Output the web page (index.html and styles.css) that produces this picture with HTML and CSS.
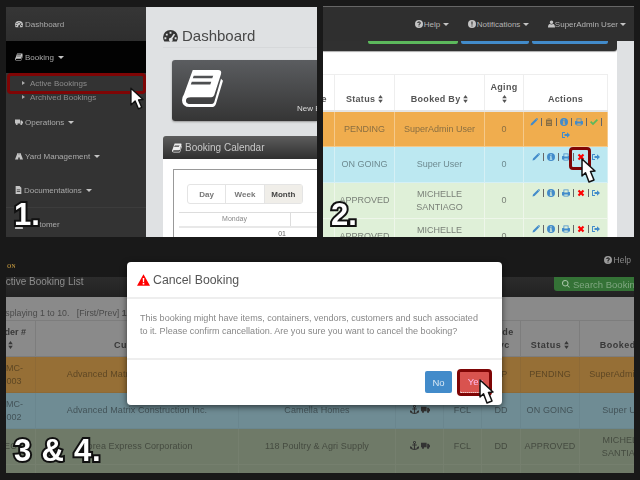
FILE: index.html
```html
<!DOCTYPE html>
<html lang="en">
<head>
<meta charset="utf-8">
<title>Cancel Booking Steps</title>
<link rel="stylesheet" href="styles.css">
</head>
<body>
<svg class="defs" width="0" height="0">
  <symbol id="i-gauge" viewBox="0 0 16 14"><path fill-rule="evenodd" d="M8 1a8 8 0 0 0-8 8c0 1.700.5 3.200 1.300 4.500h13.400C15.500 12.200 16 10.700 16 9a8 8 0 0 0-8-8zM7 3h2v2H7zM3 5h2v2H3zM11.500 5l1.500 1-3 4.500a2 2 0 1 1-1.500-1zM1.500 9h2v2h-2zM12.500 9h2v2h-2z"/></symbol>
  <symbol id="i-book" viewBox="0 0 42 40"><path fill-rule="evenodd" d="M11 1h26q4 0 3 4l-7 22q-1 2-3 2H9q-5 0-5 3.500T9 36h21q2 0 3-2l7-24 2 2-7 23q-1 4-5 4H8q-8 0-8-7 0-3 2-6zM12 7l-1 2.500h20l1-2.500zM10 13l-1 3h20l1-3z"/></symbol>
  <symbol id="i-truck" viewBox="0 0 16 14"><path d="M0 2h10v8H0zM11 4h2.500L16 7v3h-5z"/><circle cx="3.500" cy="11" r="2"/><circle cx="12.500" cy="11" r="2"/></symbol>
  <symbol id="i-road" viewBox="0 0 16 14"><path d="M5 1h2.300v3h1.400V1H11l5 13H9.500v-4h-3v4H0z"/></symbol>
  <symbol id="i-file" viewBox="0 0 12 14"><path fill-rule="evenodd" d="M1 0h7l3 3v11H1zM3 6v1.500h6V6zM3 9v1.500h6V9z"/></symbol>
  <symbol id="i-user" viewBox="0 0 14 14"><path d="M7 0a3.500 3.500 0 1 1 0 7 3.500 3.500 0 0 1 0-7zM0 14c0-4 1.500-6.500 3.500-6.800 2 1.300 5 1.300 7 0C12.500 7.500 14 10 14 14z"/></symbol>
  <symbol id="i-help" viewBox="0 0 16 16"><path fill-rule="evenodd" d="M8 0a8 8 0 1 0 0 16A8 8 0 0 0 8 0zM7 11h2v2H7zM4.500 6c0-2 1.500-3 3.500-3s3.500 1 3.500 3c0 2.500-2.500 2.500-2.500 4H7c0-2.500 2.300-2.500 2.300-4 0-.7-.5-1-1.300-1s-1.300.4-1.300 1z"/></symbol>
  <symbol id="i-alert" viewBox="0 0 16 16"><path fill-rule="evenodd" d="M8 0a8 8 0 1 0 0 16A8 8 0 0 0 8 0zM6.800 3h2.400l-.3 6.500H7.100zM7 11h2v2H7z"/></symbol>
  <symbol id="i-info" viewBox="0 0 16 16"><path fill-rule="evenodd" d="M8 0a8 8 0 1 0 0 16A8 8 0 0 0 8 0zM6.800 2.500h2.400v2.300H6.800zM5.800 6.300h3.400v5h1.300v2h-5v-2h1.200V8.300H5.800z"/></symbol>
  <symbol id="i-pencil" viewBox="0 0 16 16"><path d="M11.500 1.500l3 3-9.500 9.500-4 1 1-4zM12.500.5q1-.8 2 0l1 1q.8 1 0 2l-.5.500-3-3z"/></symbol>
  <symbol id="i-trash" viewBox="0 0 16 16"><path fill-rule="evenodd" d="M2 3h12v13H2zM5 1h6v1H5zM4 6v1h8V6zM4 9v1h8V9zM4 12v1h8v-1z"/></symbol>
  <symbol id="i-print" viewBox="0 0 16 16"><path fill-rule="evenodd" d="M3 1h10v5h2q1 0 1 1v6h-3v2H3v-2H0V7q0-1 1-1h2zM4.500 2.500V7h7V2.500zM4.500 11v2.500h7V11z"/></symbol>
  <symbol id="i-check" viewBox="0 0 16 16"><path d="M0 8.500l2.500-2.500 3.500 3.500 7.500-7.500L16 4.500 6 14.500z"/></symbol>
  <symbol id="i-x" viewBox="0 0 16 16"><path d="M1.500 4.500l3-3L8 5l3.500-3.500 3 3L11 8l3.500 3.500-3 3L8 11l-3.500 3.500-3-3L5 8z"/></symbol>
  <symbol id="i-out" viewBox="0 0 16 16"><path d="M0 3q0-1 1-1h5v2H2v8h4v2H1q-1 0-1-1zM5 6h5V2.500L16 8l-6 5.500V10H5z"/></symbol>
  <symbol id="i-sort" viewBox="0 0 8 14"><path d="M4 0l4 5.500H0zM4 14l4-5.500H0z"/></symbol>
  <symbol id="i-anchor" viewBox="0 0 16 16"><path fill-rule="evenodd" d="M8 0a2.500 2.500 0 0 1 1 4.800V6h3v1.800H9v6c2 0 3.200-1 3.800-2.300L11.500 11 16 9.500V14l-1.300-1C13.800 14.800 11.500 16 8 16s-5.800-1.200-6.700-3L0 14V9.500L4.500 11l-1.300.5C3.800 12.800 5 13.800 7 13.800v-6H4V6h3V4.800A2.500 2.500 0 0 1 8 0zM8 1.500a1 1 0 1 0 0 2 1 1 0 0 0 0-2z"/></symbol>
  <symbol id="i-search" viewBox="0 0 16 16"><path fill-rule="evenodd" d="M6.500 0a6.500 6.500 0 0 1 5.200 10.400l4 4-1.300 1.300-4-4A6.500 6.500 0 1 1 6.500 0zM6.500 2a4.500 4.500 0 1 0 0 9 4.500 4.500 0 0 0 0-9z"/></symbol>
  <symbol id="i-warn" viewBox="0 0 16 14"><path fill-rule="evenodd" d="M8 0l8 14H0zM7 4.500l.3 5h1.400l.3-5zM7 10.500v2h2v-2z"/></symbol>
  <symbol id="i-cursor" viewBox="0 0 15 24"><path d="M1 1v18l4.500-4.300L9 23l3.500-1.600-3.300-7.900L14 13z" fill="#fff" stroke="#111" stroke-width="1.500" stroke-linejoin="round"/></symbol>
  <symbol id="i-hand" viewBox="0 0 15 25"><path d="M1 1v17l3.500-3.300L8 24l5-2-3.500-8.500 4.500-.5z" fill="#fff" stroke="#111" stroke-width="1.500" stroke-linejoin="round"/></symbol>
</svg>

<!-- Step 1 -->
<section class="win win-a">
  <nav class="side">
    <a class="side-item side-first"><svg class="ico"><use href="#i-gauge"/></svg>Dashboard</a>
    <a class="side-item side-open"><svg class="ico"><use href="#i-book"/></svg>Booking<i class="caret"></i></a>
    <ul class="side-sub">
      <li><i class="tri"></i>Active Bookings</li>
      <li><i class="tri"></i>Archived Bookings</li>
    </ul>
    <a class="side-item"><svg class="ico"><use href="#i-truck"/></svg>Operations<i class="caret"></i></a>
    <a class="side-item"><svg class="ico"><use href="#i-road"/></svg>Yard Management<i class="caret"></i></a>
    <a class="side-item"><svg class="ico ico-file"><use href="#i-file"/></svg>Documentations<i class="caret"></i></a>
    <a class="side-item side-line"><svg class="ico"><use href="#i-user"/></svg>Customer</a>
  </nav>
  <main class="dash">
    <h1 class="dash-title"><svg class="dash-gauge"><use href="#i-gauge"/></svg>Dashboard</h1>
    <div class="tile">
      <svg class="tile-book"><use href="#i-book"/></svg>
      <span class="tile-label">New Booking</span>
    </div>
    <div class="cal-head"><svg class="cal-ico"><use href="#i-book"/></svg>Booking Calendar</div>
    <div class="cal-body">
      <div class="cal-box">
        <div class="seg"><span>Day</span><span>Week</span><span class="seg-on">Month</span></div>
        <div class="cal-row cal-row-head"><span class="cal-cell">Monday</span></div>
        <div class="cal-row"><span class="cal-cell cal-date">01</span></div>
      </div>
    </div>
  </main>
  <span class="hl hl-a"></span>
  <svg class="ptr ptr-a"><use href="#i-cursor"/></svg>
  <span class="step step-a">1.</span>
</section>

<!-- Step 2 -->
<section class="win win-b">
  <header class="topnav">
    <span class="topnav-item"><svg class="ico"><use href="#i-help"/></svg>Help<i class="caret"></i></span>
    <span class="topnav-item"><svg class="ico"><use href="#i-alert"/></svg>Notifications<i class="caret"></i></span>
    <span class="topnav-item topnav-user"><svg class="ico"><use href="#i-user"/></svg>SuperAdmin User<i class="caret"></i></span>
  </header>
  <div class="page">
    <div class="sheet">
      <div class="strip"><span class="strip-green"></span><span class="strip-blue strip-b1"></span><span class="strip-blue strip-b2"></span></div>
      <table class="list">
        <colgroup><col class="c0"><col class="c1"><col class="c2"><col class="c3"><col class="c4"></colgroup>
        <thead>
          <tr><th>Mode</th><th>Status <svg class="srt"><use href="#i-sort"/></svg></th><th>Booked By <svg class="srt"><use href="#i-sort"/></svg></th><th>Aging <svg class="srt"><use href="#i-sort"/></svg></th><th>Actions</th></tr>
        </thead>
        <tbody>
          <tr class="r-o"><td>DP</td><td>PENDING</td><td>SuperAdmin User</td><td>0</td><td class="acts"><div class="acts-in">
            <svg class="a blue"><use href="#i-pencil"/></svg><i class="sep"></i><svg class="a brown"><use href="#i-trash"/></svg><i class="sep"></i><svg class="a blue"><use href="#i-info"/></svg><i class="sep"></i><svg class="a blue"><use href="#i-print"/></svg><i class="sep"></i><svg class="a green"><use href="#i-check"/></svg><i class="sep"></i><svg class="a blue"><use href="#i-out"/></svg></div></td></tr>
          <tr class="r-b"><td>DD</td><td>ON GOING</td><td>Super User</td><td>0</td><td class="acts"><div class="acts-in">
            <svg class="a blue"><use href="#i-pencil"/></svg><i class="sep"></i><svg class="a blue"><use href="#i-info"/></svg><i class="sep"></i><svg class="a blue"><use href="#i-print"/></svg><i class="sep"></i><svg class="a red"><use href="#i-x"/></svg><i class="sep"></i><svg class="a blue"><use href="#i-out"/></svg></div></td></tr>
          <tr class="r-g"><td>DD</td><td>APPROVED</td><td>MICHELLE SANTIAGO</td><td>0</td><td class="acts"><div class="acts-in">
            <svg class="a blue"><use href="#i-pencil"/></svg><i class="sep"></i><svg class="a blue"><use href="#i-info"/></svg><i class="sep"></i><svg class="a blue"><use href="#i-print"/></svg><i class="sep"></i><svg class="a red"><use href="#i-x"/></svg><i class="sep"></i><svg class="a blue"><use href="#i-out"/></svg></div></td></tr>
          <tr class="r-g"><td>DD</td><td>APPROVED</td><td>MICHELLE SANTIAGO</td><td>0</td><td class="acts"><div class="acts-in">
            <svg class="a blue"><use href="#i-pencil"/></svg><i class="sep"></i><svg class="a blue"><use href="#i-info"/></svg><i class="sep"></i><svg class="a blue"><use href="#i-print"/></svg><i class="sep"></i><svg class="a red"><use href="#i-x"/></svg><i class="sep"></i><svg class="a blue"><use href="#i-out"/></svg></div></td></tr>
        </tbody>
      </table>
    </div>
    <div class="gutter"></div>
  </div>
  <span class="hl hl-b"></span>
  <svg class="ptr ptr-b"><use href="#i-hand"/></svg>
  <span class="step step-b">2.</span>
</section>

<!-- Steps 3 and 4 -->
<section class="win win-c">
  <header class="dim-nav"><span class="dim-logo">ON</span><span class="dim-help"><svg class="ico"><use href="#i-help"/></svg>Help</span></header>
  <div class="dim-bar"><span class="dim-title">Active Booking List</span><span class="dim-search"><svg class="ico"><use href="#i-search"/></svg>Search Bookings</span></div>
  <div class="dim-sheet">
    <div class="dim-pager">Displaying 1 to 10. &nbsp; [First/Prev] <b>1</b></div>
    <table class="wide">
      <colgroup><col class="w0"><col class="w1"><col class="w2"><col class="w3"><col class="w4"><col class="w5"><col class="w6"><col class="w7"></colgroup>
      <thead>
        <tr><th class="th-order">Order #<br><svg class="srt"><use href="#i-sort"/></svg></th><th>Customer</th><th>Consignee</th><th>Type</th><th>Load</th><th>Mode Svc</th><th>Status <svg class="srt"><use href="#i-sort"/></svg></th><th>Booked By</th></tr>
      </thead>
      <tbody>
        <tr class="d-o"><td>AMC-<br>0003</td><td>Advanced Matrix Construction Inc.</td><td>Camella Homes</td><td><svg class="t"><use href="#i-anchor"/></svg><svg class="t"><use href="#i-truck"/></svg></td><td>FCL</td><td>DP</td><td>PENDING</td><td>SuperAdmin User</td></tr>
        <tr class="d-b"><td>AMC-<br>0002</td><td>Advanced Matrix Construction Inc.</td><td>Camella Homes</td><td><svg class="t"><use href="#i-anchor"/></svg><svg class="t"><use href="#i-truck"/></svg></td><td>FCL</td><td>DD</td><td>ON GOING</td><td>Super User</td></tr>
        <tr class="d-g"><td>KEC-0</td><td>Korea Express Corporation</td><td>118 Poultry &amp; Agri Supply</td><td><svg class="t"><use href="#i-anchor"/></svg><svg class="t"><use href="#i-truck"/></svg></td><td>FCL</td><td>DD</td><td>APPROVED</td><td>MICHELLE SANTIAGO</td></tr>
        <tr class="d-g"><td>KEC-<br>0001</td><td></td><td></td><td></td><td></td><td></td><td></td><td>MICHELLE SANTIAGO</td></tr>
      </tbody>
    </table>
  </div>
  <span class="step step-c">3 &amp; 4.</span>
</section>

<div class="modal">
  <div class="modal-head"><svg class="modal-warn"><use href="#i-warn"/></svg>Cancel Booking</div>
  <p class="modal-body">This booking might have items, containers, vendors, customers and such associated to it. Please confirm cancellation. Are you sure you want to cancel the booking?</p>
  <div class="modal-foot">
    <button class="btn btn-no">No</button>
    <button class="btn btn-yes">Yes</button>
  </div>
  <span class="hl hl-c"></span>
  <svg class="ptr ptr-c"><use href="#i-hand"/></svg>
</div>
</body>
</html>
```

FILE: styles.css
```css
* { box-sizing: border-box; }
html, body { margin: 0; height: 100%; }
body {
  background: #191919;
  font-family: "Liberation Sans", Arial, sans-serif;
  overflow: hidden;
  position: relative;
  color: #555;
}
.defs { position: absolute; }
svg { fill: currentColor; }

/* free-canvas windows */
.win { position: absolute; overflow: hidden; filter: blur(.35px); }
.win-a { left: 6px; top: 7px; width: 311px; height: 230px; display: flex; background: #333; }
.win-b { left: 323px; top: 6px; width: 311px; height: 231px; display: flex; flex-direction: column; }
.win-c { left: 6px; top: 240px; width: 628px; height: 233px; display: flex; flex-direction: column; }

/* overlay items */
.hl { position: absolute; border: 3px solid #7f0505; border-radius: 4px; }
.ptr { position: absolute; }
.step {
  position: absolute;
  color: #fff;
  font-weight: 700;
  font-size: 31px;
  line-height: 1;
  -webkit-text-stroke: 4px #111;
  paint-order: stroke fill;
}

/* sidebar */
.side { width: 140px; flex: none; background: #333; }
.side-item {
  display: flex;
  align-items: center;
  height: 34px;
  padding-left: 9px;
  font-size: 8px;
  color: #aaa;
}
.ico { width: 8px; height: 8px; margin-right: 2px; flex: none; color: #c4c4c4; }
.ico-file { width: 7px; }
.side-first { background: linear-gradient(#363636, #2e2e2e); }
.side-open { background: #020202; height: 32px; }
.side-line { border-top: 1px solid #3c3c3c; }
.side-sub { margin: 0; padding: 3px 0 0 16px; height: 32px; list-style: none; background: #333; font-size: 8px; color: #8c8c8c; }
.side-sub li { display: flex; align-items: center; height: 14px; }
.tri { width: 0; height: 0; border-left: 3px solid #aaa; border-top: 2.500px solid transparent; border-bottom: 2.500px solid transparent; margin: 0 5px 0 0; }
.caret { width: 0; height: 0; border-top: 3px solid currentColor; border-left: 3px solid transparent; border-right: 3px solid transparent; margin-left: 4px; color: #c4c4c4; }

/* dashboard */
.dash { flex: 1; background: #dfe1e3; padding-left: 17px; min-width: 0; }
.dash-title {
  margin: 0;
  height: 41px;
  padding-top: 16px;
  display: flex;
  align-items: center;
  font-size: 15px;
  font-weight: 400;
  color: #484848;
  border-bottom: 1px solid #d6d8da;
}
.dash-gauge { width: 15px; height: 13px; margin-right: 4px; color: #333; }
.tile {
  margin: 12px 0 0 9px;
  height: 61px;
  background: linear-gradient(#5b5d60, #353535);
  border-radius: 3px 0 0 3px;
  box-shadow: 0 1px 2px #999;
  position: relative;
  display: flex;
  align-items: flex-start;
  padding: 9px 0 0 10px;
  overflow: hidden;
}
.tile-book { width: 41px; height: 39px; color: #fff; }
.tile-label { position: absolute; left: 125px; bottom: 8px; font-size: 8px; color: #ddd; white-space: nowrap; }
.cal-head {
  margin-top: 15px;
  height: 23px;
  padding-left: 9px;
  display: flex;
  align-items: center;
  background: linear-gradient(#5d5d5d, #2f2f2f);
  border-radius: 3px 0 0 0;
  color: #c8c8c8;
  font-size: 10px;
}
.cal-ico { width: 10px; height: 10px; margin-right: 3px; color: #eee; }
.cal-body { background: #fff; height: 80px; padding: 10px 0 0 10px; }
.cal-box { border: 1px solid #999; border-width: 1px 0 0 1px; height: 100%; padding: 14px 0 0 5px; }
.seg { display: flex; width: 116px; height: 20px; border: 1px solid #e4e4e4; border-radius: 3px; font-size: 8px; font-weight: 700; color: #777; margin-left: 8px; }
.seg span { flex: 1; display: flex; align-items: center; justify-content: center; border-right: 1px solid #e4e4e4; }
.seg .seg-on { background: #f0eee9; color: #444; border: 0; }
.cal-row { display: flex; border-top: 1px solid #ddd; margin-top: 8px; }
.cal-row-head { height: 14px; }
.cal-row + .cal-row { margin-top: 0; height: 13px; border-top: 2px solid #e8e8e8; }
.cal-cell { width: 112px; border-right: 1px solid #ddd; font-size: 7px; color: #888; text-align: center; padding-top: 2px; }
.cal-date { text-align: right; padding-right: 5px; color: #666; border: 0; }

.hl-a { left: 1px; top: 66px; width: 139px; height: 21px; }
.ptr-a { left: 124px; top: 80px; width: 14px; height: 23px; }
.step-a { left: 8px; top: 192px; }

/* step 2 */
.topnav {
  height: 35px;
  flex: none;
  display: flex;
  align-items: center;
  justify-content: flex-end;
  gap: 18.500px;
  padding-right: 8px;
  background: #2f2f2f;
  border-top: 1px solid #666;
  font-size: 8px;
  color: #b4b4b4;
}
.topnav-item { display: flex; align-items: center; }
.topnav-item .ico { margin-right: 1px; }
.topnav-item .caret { margin-left: 3px; }
.topnav-user .ico { width: 7px; margin-right: 0; }
.topnav-user .caret { margin-left: 2px; }
.page { flex: 1; display: flex; min-height: 0; }
.sheet { width: 294px; background: #fff; overflow: hidden; flex: none; }
.gutter { flex: 1; background: #dfe1e3; }
.strip { height: 10px; background: #303030; border-radius: 0 0 3px 0; box-shadow: 0 1px 1px #aaa; position: relative; display: flex; }
.strip span { height: 3px; border-radius: 0 0 2px 2px; display: block; }
.strip-green { margin-left: 45px; width: 90px; background: #5cb85c; }
.strip-blue { background: #428bca; }
.strip-b1 { margin-left: 3px; width: 68px; }
.strip-b2 { margin-left: 3px; width: 76px; }

.list { table-layout: fixed; border-collapse: collapse; margin: 23px 0 0 -29px; width: 313px; font-size: 9px; }
.c0 { width: 40px; } .c1 { width: 60px; } .c2 { width: 90px; } .c3 { width: 39px; } .c4 { width: 84px; }
.list th, .list td { border: 1px solid #eee; text-align: center; }
.list th { height: 36px; vertical-align: bottom; padding: 0 3px 5px; color: #555; font-size: 9px; letter-spacing: .3px; border-bottom: 2px solid #e4e4e4; line-height: 12px; }
.list td { height: 36px; padding: 0 3px; line-height: 12.500px; }
.srt { width: 5px; height: 8px; vertical-align: -1px; }
.r-o td { background: #f0ad4e; color: #8a6f42; border-color: #f5c98a; }
.r-b td { background: #bce8f1; color: #6e8a90; border-color: #d5f0f5; }
.r-g td { background: #dff0d8; color: #7a8078; border-color: #eef6ea; }
.acts { vertical-align: top; }
.list .acts { padding: 6px 2px 0; }
.acts-in { display: flex; flex-wrap: wrap; justify-content: center; align-items: center; gap: 3px; row-gap: 5px; }
.a { width: 8px; height: 8px; }
.sep { width: 1px; height: 8px; background: #666; }
.blue { color: #428bca; } .brown { color: #8a6f42; } .green { color: #5cb85c; } .red { color: #f00; }

.hl-b { left: 246px; top: 141px; width: 22px; height: 23px; }
.ptr-b { left: 258px; top: 152px; width: 15px; height: 25px; }
.step-b { left: 8px; top: 193px; }

/* step 3 & 4 background */
.dim-nav { height: 37px; flex: none; display: flex; justify-content: space-between; background: #191919; font-size: 8px; }
.dim-logo { color: #b08a3a; font-family: "Liberation Serif", serif; font-size: 5.500px; font-weight: 700; padding: 23px 0 0 1px; letter-spacing: .3px; }
.dim-help { color: #8a8a8a; display: flex; align-items: center; height: 20px; margin-top: 10px; padding-right: 3px; font-size: 8.500px; }
.dim-help .ico { color: #9a9a9a; }
.dim-bar { height: 20px; flex: none; background: linear-gradient(#2c2c2c, #222); display: flex; justify-content: space-between; }
.dim-title { margin-left: -7px; font-size: 10px; line-height: 9px; color: #8d8d8d; }
.dim-search { background: #347236; width: 80px; height: 14px; border-radius: 0 0 0 3px; font-size: 9.500px; color: #7fa680; display: flex; align-items: center; padding-left: 8px; white-space: nowrap; overflow: hidden; }
.dim-search .ico { color: #a8c4a8; margin-right: 3px; }
.dim-sheet { flex: 1; background: #8a8a8a; overflow: hidden; }
.dim-pager { height: 23px; padding: 11px 0 0; margin-left: -9px; font-size: 8.800px; line-height: 10px; color: #4a4a4a; white-space: nowrap; }
.wide { table-layout: fixed; border-collapse: collapse; margin-left: -19px; width: 684px; font-size: 9px; letter-spacing: .1px; }
.w0 { width: 48px; } .w1 { width: 203px; } .w2 { width: 157px; } .w3 { width: 48px; } .w4 { width: 38px; } .w5 { width: 39px; } .w6 { width: 59px; } .w7 { width: 92px; }
.wide th, .wide td { border: 1px solid #7d7d7d; text-align: center; }
.wide th { height: 36px; vertical-align: bottom; padding: 0 2px 5px; color: #383838; font-size: 9px; line-height: 12.500px; letter-spacing: .5px; }
.wide .th-order { letter-spacing: 0; padding-right: 5px; }
.wide td { height: 36px; padding: 0 3px; line-height: 12.500px; }
.t { width: 9px; height: 9px; margin: 0 1px; color: #333; vertical-align: -1px; }
.d-o td { background: #966f36; color: #5e4724; border-color: #8e6a36; }
.d-b td { background: #6f8c94; color: #435358; border-color: #6a868e; }
.d-g td { background: #6f7a68; color: #454b40; border-color: #757f6e; }
.step-c { left: 8px; top: 195px; letter-spacing: .8px; }

/* modal */
.modal {
  position: absolute;
  left: 127px;
  top: 262px;
  width: 375px;
  height: 143px;
  background: #fff;
  border-radius: 4px;
  box-shadow: 0 2px 6px rgba(0,0,0,.6);
  filter: blur(.3px);
}
.modal-head {
  height: 37px;
  display: flex;
  align-items: center;
  padding-left: 10px;
  font-size: 12.300px;
  color: #555;
  border-bottom: 2px solid #eee;
}
.modal-warn { width: 13px; height: 12px; margin-right: 3px; color: #f00; }
.modal-body { margin: 0; height: 59px; padding: 13px 18px 0 13px; font-size: 9.050px; line-height: 12.500px; color: #888; }
.modal-foot { border-top: 2px solid #eee; height: 47px; display: flex; justify-content: flex-end; align-items: flex-start; gap: 8px; padding: 11px 11px 0 0; }
.btn { border: 0; border-radius: 2px; font: 9.500px "Liberation Sans", Arial, sans-serif; color: #d8e8f5; padding: 0; height: 22px; }
.btn-no { width: 27px; background: #428bca; }
.btn-yes { width: 31px; background: #d9534f; color: #fbe; border-bottom: 1px dotted #fff; }
.hl-c { right: 10px; top: 107px; width: 35px; height: 27px; }
.ptr-c { left: 352px; top: 117px; width: 15px; height: 25px; }
```
